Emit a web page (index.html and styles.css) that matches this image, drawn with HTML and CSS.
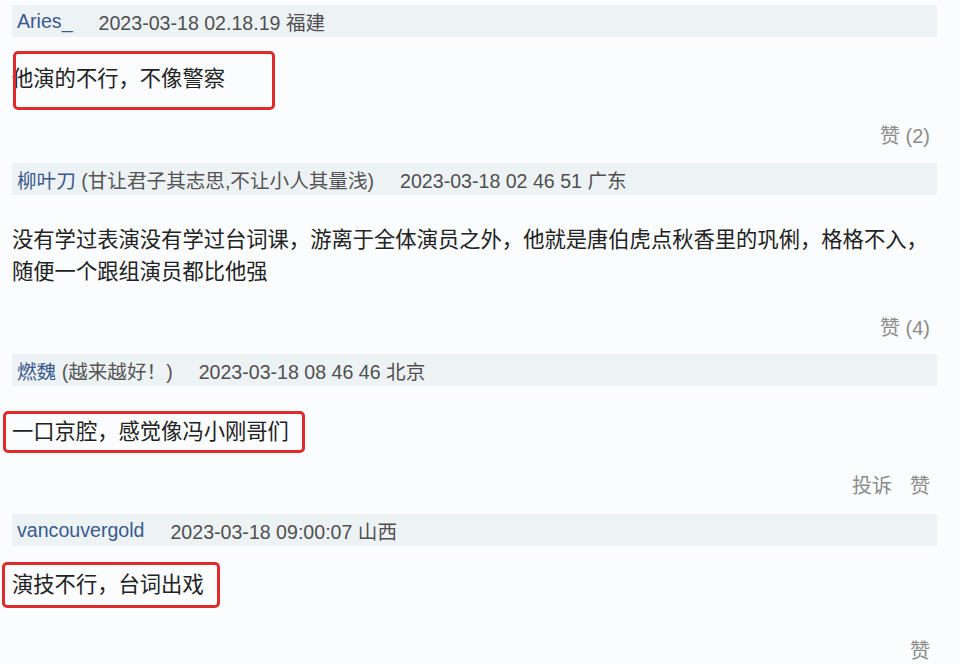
FILE: index.html
```html
<!DOCTYPE html>
<html lang="zh-CN">
<head>
<meta charset="utf-8">
<title>评论</title>
<link rel="stylesheet" href="styles.css">
</head>
<body>
<div class="thread">
  <div class="comment c1">
    <div class="meta"><span class="user">Aries_</span><span class="time">2023-03-18 02.18.19 福建</span></div>
    <div class="content"><p class="text">他演的不行，不像警察<span class="mark m1"></span></p></div>
    <div class="actions"><span class="like">赞 (2)</span></div>
  </div>
  <div class="comment c2">
    <div class="meta"><span class="user">柳叶刀 <span class="sig">(甘让君子其志思,不让小人其量浅)</span></span><span class="time">2023-03-18 02 46 51 广东</span></div>
    <div class="content"><p class="text">没有学过表演没有学过台词课，游离于全体演员之外，他就是唐伯虎点秋香里的巩俐，格格不入，随便一个跟组演员都比他强</p></div>
    <div class="actions"><span class="like">赞 (4)</span></div>
  </div>
  <div class="comment c3">
    <div class="meta"><span class="user">燃魏 <span class="sig">(越来越好！)</span></span><span class="time">2023-03-18 08 46 46 北京</span></div>
    <div class="content"><p class="text">一口京腔，感觉像冯小刚哥们<span class="mark m3"></span></p></div>
    <div class="actions"><span class="report">投诉</span><span class="like">赞</span></div>
  </div>
  <div class="comment c4">
    <div class="meta"><span class="user">vancouvergold</span><span class="time">2023-03-18 09:00:07 山西</span></div>
    <div class="content"><p class="text">演技不行，台词出戏<span class="mark m4"></span></p></div>
    <div class="actions"><span class="like">赞</span></div>
  </div>
</div>
</body>
</html>
```

FILE: styles.css
```css
* { box-sizing: border-box; }

html, body {
  margin: 0;
  padding: 0;
  background: #fafcfd;
}

body {
  width: 960px;
  height: 664px;
  overflow: hidden;
  font-family: "Liberation Sans", Arial, "Noto Sans CJK SC", sans-serif;
}

.thread {
  padding: 5px 23px 0 12px;
  display: flex;
  flex-direction: column;
}

.comment {
  display: flex;
  flex-direction: column;
}

.meta {
  height: 32px;
  background: #edf2f5;
  display: flex;
  align-items: center;
  gap: 26px;
  padding-left: 5px;
  font-size: 19.6px;
  color: #505050;
  white-space: nowrap;
}

.user {
  color: #3a5a8c;
}

.sig {
  color: #555555;
}

.time {
  color: #505050;
}

.content {
  max-width: 922px;
}

.text {
  position: relative;
  display: inline-block;
  margin: 0;
  font-size: 21.3px;
  line-height: 32px;
  color: #222222;
}

.mark {
  position: absolute;
  border: 3px solid #de2b2b;
  border-radius: 5px;
}

.m1 { left: 1px; top: -12px; width: 262px; height: 59px; }
.m3 { left: -9px; top: -5px; width: 302px; height: 42px; }
.m4 { left: -10px; top: -7px; width: 218px; height: 46px; }

.actions {
  display: flex;
  justify-content: flex-end;
  gap: 18px;
  padding-right: 7px;
  font-size: 20px;
  line-height: 28px;
  color: #8c8c8c;
}

.c1 .content { padding-top: 26px; }
.c1 .actions { margin-top: 27px; margin-bottom: 13px; }

.c2 .content { padding-top: 29px; }
.c2 .actions { margin-top: 26px; margin-bottom: 12px; }

.c3 .content { padding-top: 30px; }
.c3 .actions { margin-top: 24px; margin-bottom: 14px; }

.c4 .content { padding-top: 23px; }
.c4 .actions { margin-top: 36px; }
```
